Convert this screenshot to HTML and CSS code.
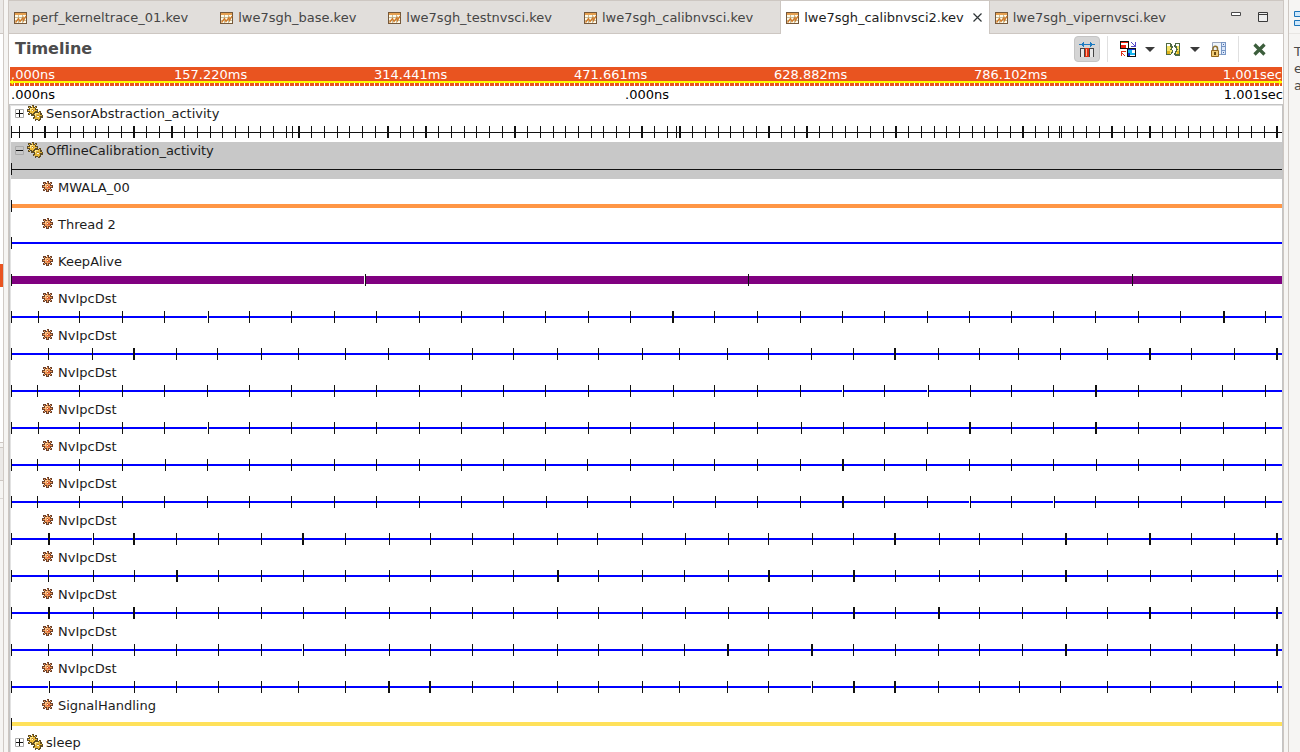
FILE: index.html
```html
<!DOCTYPE html>
<html lang="en">
<head>
<meta charset="utf-8">
<title>Timeline</title>
<link rel="stylesheet" href="styles.css">
</head>
<body>
<svg class="sprites" aria-hidden="true">
  <symbol id="i-file" viewBox="0 0 13 12" shape-rendering="crispEdges">
    <path fill="#75583a" d="M0 0h13v12H0z"/>
    <path fill="#e6a050" d="M1 1h11v2H1z"/>
    <path fill="#fffbea" d="M1 3h11v8H1z"/>
    <path fill="#c4bb9c" d="M1 5h11v1H1zM1 8h11v1H1zM4 3h1v8H4zM8 3h1v8H8z"/>
    <path fill="none" stroke="#d07a28" stroke-width="1.300" shape-rendering="auto" d="M1.500 10.500 4.500 6.500 6 9.500 9 5.500 9.500 8.500 12 4"/>
  </symbol>
  <symbol id="i-gear" viewBox="0 0 11 11" shape-rendering="crispEdges">
    <path fill="#6b412c" d="M2 1h2v1h1V0h2v2h1V1h2v2H9v1h2v3H9v1h1v2H8V9H7v2H4V9H3v1H1V8h1V7H0V4h2V3H1V1z"/>
    <path fill="#f09a58" d="M2 2h1v1H2zM5 1h1v2H5zM8 2h1v1H8zM1 5h2v1H1zM8 5h2v1H8zM2 8h1v1H2zM8 8h1v1H8zM5 8h1v2H5zM3 3h5v5H3z"/>
    <path fill="#ffc88c" d="M3 3h3v1H4v2H3z"/>
    <path fill="#e0603a" d="M5 7h3V5H7v1H5z"/>
    <path fill="#fff2dc" d="M5 5h1v1H5z"/>
    <path fill="#b45c34" d="M5 4h1v1H5zM6 5h1v1H6z"/>
  </symbol>
  <symbol id="i-gears" viewBox="0 0 16 16" shape-rendering="crispEdges">
    <path fill="#5e4c24" d="M2 1h2v1h1V0h2v2h1V1h2v2H9v1h2v3H9v1h1v2H8V9H7v2H4V9H3v1H1V8h1V7H0V4h2V3H1V1z"/>
    <path fill="#eebc3c" d="M2 2h1v1H2zM5 1h1v2H5zM8 2h1v1H8zM1 5h2v1H1zM8 5h2v1H8zM2 8h1v1H2zM5 8h1v2H5zM3 3h5v5H3z"/>
    <path fill="#ffe88c" d="M3 3h3v1H4v2H3z"/>
    <path fill="#fffbe8" d="M5 5h1v1H5z"/>
    <path fill="#b4842c" d="M5 4h1v1H5zM6 5h1v1H6z"/>
    <path fill="#5e4c24" d="M7 7h2V6h1v1h2V6h2v2h1v2h1v3h-2v2h-1v1h-2v-1h-2v1H8v-2H6v-2h1v-1H5V9h2z"/>
    <path fill="#e2b43a" d="M8 8h5v6H8zM7 9h1v1H7zM13 10h2v1h-2zM12 7h1v1h-1zM7 13h1v1H7zM11 14h1v1h-1z"/>
    <path fill="#ffe88c" d="M8 8h3v1H9v2H8z"/>
    <path fill="#b4842c" d="M10 10h2v1h-2zM12 11h1v1h-1z"/>
    <path fill="#fffbe8" d="M10 11h2v1h-2z"/>
  </symbol>
</svg>
<div class="workbench">
  <aside class="left-dock" aria-hidden="true">
    <div class="dock-tab"></div>
    <div class="dock-body"><div class="dock-selection"></div></div>
    <div class="dock-tab dock-tab-low"></div>
    <div class="dock-toolbar"></div>
    <div class="dock-rest"></div>
  </aside>

  <main class="view">
    <header class="tabs">
      <nav class="tab-list" role="tablist">
        <button class="tab" role="tab"><svg class="file-icon"><use href="#i-file"/></svg>perf_kerneltrace_01.kev</button>
        <button class="tab" role="tab"><svg class="file-icon"><use href="#i-file"/></svg>lwe7sgh_base.kev</button>
        <button class="tab" role="tab"><svg class="file-icon"><use href="#i-file"/></svg>lwe7sgh_testnvsci.kev</button>
        <button class="tab" role="tab"><svg class="file-icon"><use href="#i-file"/></svg>lwe7sgh_calibnvsci.kev</button>
        <div class="tab-active">
          <button class="tab" role="tab" aria-selected="true"><svg class="file-icon"><use href="#i-file"/></svg>lwe7sgh_calibnvsci2.kev</button>
          <button class="close" aria-label="Close tab"><svg width="9" height="9" viewBox="0 0 9 9"><path d="M.5.5l8 8M8.500.5l-8 8" fill="none" stroke="#2e3436" stroke-width="1.200"/></svg></button>
        </div>
        <button class="tab" role="tab"><svg class="file-icon"><use href="#i-file"/></svg>lwe7sgh_vipernvsci.kev</button>
      </nav>
      <div class="window-buttons">
        <button aria-label="Minimize"><svg width="11" height="11" viewBox="0 0 11 11"><path d="M.5.5h9v3h-9z" fill="#fff" stroke="#4a4a4a"/></svg></button>
        <button aria-label="Maximize"><svg width="11" height="11" viewBox="0 0 11 11"><path d="M.5.5h9v9h-9zM.5 2.500h9" fill="#eee" stroke="#3a3a3a"/></svg></button>
      </div>
    </header>

    <div class="titlebar">
      <h1>Timeline</h1>
      <div class="tools">
        <button class="toggle" aria-label="Show event range" aria-pressed="true">
          <svg width="16" height="16" viewBox="0 0 16 16" shape-rendering="crispEdges"><path fill="#1c7ac0" d="M0 3h16v1H0zM4 1h1v5H4zM11 1h1v5h-1zM3 2h1v3H3zM12 2h1v3h-1z"/><path fill="#444" d="M1 7h14v9h-1V8h-3v8h-1V8H6v8H5V8H2v8H1z"/><path fill="#e8e8e8" d="M2 8h3v8H2zM11 8h3v8h-3z"/><path fill="#e03010" d="M6 7h4v9H6z"/><path fill="#ffb090" d="M7 8h1v7H7z"/></svg>
        </button>
        <span class="divider"></span>
        <button class="tool-swap" aria-label="Switch pane">
          <svg width="16" height="16" viewBox="0 0 16 16" shape-rendering="crispEdges"><path fill="#111" d="M0 0h9v8H0z"/><path fill="#fff" d="M1 2h7v5H1z"/><path fill="#f02010" d="M1 1h7v1H1zM1 4h5v3H1z"/><path fill="#111" d="M7 7h9v9H7z"/><path fill="#fff" d="M8 9h7v6H8z"/><path fill="#18b8f0" d="M8 9h4v3H8zM10 12h5v2h-5z"/><path fill="#1030d0" d="M8 8h7v1H8zM8 12h2v3H8z"/><path fill="none" stroke="#5548c8" d="M11 1l4 4M15.500 1v4.500H11"/><path fill="none" stroke="#e03018" d="M5.500 15.500l-4-4M1.500 15v-4.500H6"/></svg>
          <span class="caret"></span>
        </button>
        <button class="tool-nav" aria-label="Navigate events">
          <svg width="15" height="13" viewBox="0 0 15 13" shape-rendering="crispEdges"><path fill="#4f6a44" d="M0 0h5v1h1v2h1v2H6v2h1v3H6v1H5v1H0zM9 0h5v13H9v-1H8v-2h1V8h1V5H9V4H8V2h1z"/><path fill="#f4e468" d="M1 3h3v1h1v2H4v1h2v2H5v2H1zM11 3h2v8h-3V9h1V7h1V6h-1z"/><path fill="#fff" d="M1 1h3v2H1zM10 1h3v2h-3z"/><path fill="#e0b41c" d="M1 8h3v3H1zM11 8h2v3h-2z"/></svg>
          <span class="caret"></span>
        </button>
        <button class="tool-lock" aria-label="Lock view">
          <svg width="16" height="16" viewBox="0 0 16 16"><path fill="#eef4fb" stroke="#9aa6bc" d="M1.500 1.500h13v12h-13z"/><path fill="#7896c4" d="M10 1h5v13h-5z"/><path fill="#dce8fa" d="M11 2h3v3h-3zM11 6h3v3h-3zM11 10h3v3h-3z"/><path fill="#4668a4" d="M12 3h1v1h-1zM12 11h1v1h-1z"/><path fill="none" stroke="#8c7030" stroke-width="1.500" d="M2 9V7.500a2.200 2.200 0 0 1 4.500 0V9"/><path fill="#f0cc78" stroke="#94681c" d="M.5 9.500h7v6h-7z"/><path fill="#6b4a10" d="M3 11h2v3H3z"/></svg>
        </button>
        <span class="divider"></span>
        <button class="tool-clear" aria-label="Clear">
          <svg width="13" height="13" viewBox="0 0 13 13"><path d="M1.500 1.500l10 10M11.500 1.500l-10 10" fill="none" stroke="#3c5e3c" stroke-width="3.200"/></svg>
        </button>
      </div>
    </div>

    <div class="ruler">
      <span>.000ns</span><span>157.220ms</span><span>314.441ms</span><span>471.661ms</span><span>628.882ms</span><span>786.102ms</span><span>1.001sec</span>
    </div>
    <div class="range"></div>
    <div class="selection"><span>.000ns</span><span>.000ns</span><span>1.001sec</span></div>
    <ul class="tree" id="tree"></ul>
  </main>

  <aside class="right-dock">
    <div class="outline-tab"><svg width="16" height="16" viewBox="0 0 16 16"><path fill="#cfe8fb" stroke="#1c74b8" d="M.5.5h6v5h-6zM.5 9.500h6v5h-6z"/></svg></div>
    <p>T<br>e<br>a</p>
  </aside>
</div>
<script src="timeline.js"></script>
</body>
</html>
```
FILE: styles.css
```css
* { box-sizing: border-box; }

body {
  margin: 0;
  height: 100vh;
  overflow: hidden;
  background: #f6f5f3;
  color: #1c1c1c;
  font: 13px/18px "DejaVu Sans", sans-serif;
}

button {
  margin: 0;
  padding: 0;
  border: 0;
  background: none;
  color: inherit;
  font: inherit;
}

svg { display: block; flex: none; }
.sprites { position: absolute; width: 0; height: 0; }

.workbench {
  display: grid;
  grid-template-columns: 4px minmax(0, 1fr) 12px;
  column-gap: 4px;
  height: 100%;
}

/* Neighbouring docks */
.left-dock {
  display: flex;
  flex-direction: column;
  border-right: 1px solid #d0cac5;
}
.dock-tab { height: 34px; background: #ebe9e7; border-bottom: 1px solid #cdc7c2; }
.dock-body { height: 409px; padding-top: 230px; background: #fff; border-bottom: 1px solid #cdc7c2; }
.dock-selection { height: 23px; background: #e95420; }
.dock-tab-low { margin-top: 4px; border-top: 1px solid #cdc7c2; }
.dock-toolbar { height: 18px; border-bottom: 1px solid #dcd8d5; }
.dock-rest { flex: 1; }

.right-dock { border-left: 1px solid #cdc7c2; }
.outline-tab { height: 34px; padding: 11px 0 0 5px; border-bottom: 1px solid #e8e6e3; }
.right-dock p { margin: 0; padding: 9px 0 0 5px; color: #4a4a4a; line-height: 17px; }

/* Editor view */
.view {
  display: flex;
  flex-direction: column;
  min-width: 0;
  overflow: hidden;
  border: 1px solid #cdc7c2;
  border-bottom: 0;
  background: #fff;
}

.tabs {
  display: flex;
  flex: none;
  height: 33px;
  background: #e1dedb;
  box-shadow: inset 0 -1px #cdc7c2;
}
.tab-list { display: flex; flex: 1; min-width: 0; overflow: hidden; }
.tab {
  display: flex;
  align-items: center;
  gap: 5px;
  padding: 0 27px 0 5px;
  color: #454545;
  white-space: nowrap;
}
.file-icon { width: 13px; height: 12px; }
.tab-active {
  display: flex;
  align-items: center;
  padding-right: 7px;
  border: solid #cdc7c2;
  border-width: 0 1px;
  background: #fff;
}
.tab-active .tab { padding-right: 9px; color: #1c1c1c; }
.window-buttons { display: flex; gap: 16px; padding: 11px 14px 0 0; }
.window-buttons button { display: flex; align-items: flex-start; }

.titlebar {
  display: flex;
  flex: none;
  align-items: center;
  justify-content: space-between;
  height: 33px;
  padding: 0 17px 3px 6px;
}
.titlebar h1 { margin: 0; color: #4c4c4c; font-size: 16px; line-height: 20px; }
.tools { display: flex; align-items: center; }
.tools button { display: flex; align-items: center; }
.tools .toggle {
  justify-content: center;
  width: 26px;
  height: 26px;
  border: 1px solid #c4c4c4;
  border-radius: 4px;
  background: #d5d5d5;
}
.divider { width: 1px; height: 26px; margin: 0 12px 0 7px; background: #e0e0e0; }
.tool-swap, .tool-nav { gap: 9px; margin-right: 11px; }
.tool-lock + .divider { margin: 0 14px 0 11px; }
.caret { border: solid transparent; border-width: 5px 5px 0; border-top-color: #3a3a3a; }

/* Time axis */
.ruler {
  display: grid;
  flex: none;
  grid-template-columns: 163fr 200fr 200fr 200fr 200fr 200fr 108fr;
  height: 14px;
  margin: 0 1px;
  padding-left: 1px;
  background: #e95420;
  color: #fff;
  line-height: 16px;
  white-space: nowrap;
}
.ruler span:last-child { text-align: right; }
.range {
  position: relative;
  flex: none;
  height: 5px;
  margin: 0 1px;
  border-top: 2px solid #ff0;
  background: repeating-linear-gradient(90deg, #e95420 0 4px, #fff 4px 5px);
}
.range::before, .range::after {
  content: "";
  position: absolute;
  top: -4px;
  border: solid transparent;
  border-width: 3px 0;
}
.range::before { left: 0; border-right: 3px solid #ff0; }
.range::after { right: 0; border-left: 3px solid #ff0; }
.selection {
  display: grid;
  flex: none;
  grid-template-columns: 1fr auto 1fr;
  height: 18px;
  padding-left: 2px;
  color: #000;
}
.selection span:last-child { text-align: right; }

/* Process and thread rows */
.tree {
  flex: 1;
  min-height: 0;
  margin: 0;
  padding: 0 0 0 1px;
  overflow: hidden;
  border: 1px solid #c4c4c4;
  border-bottom: 0;
  box-shadow: inset 1px 1px #e2e2e2;
  list-style: none;
}
.row { height: 37px; }
.row.selected { background: #c8c8c8; }
.label { display: flex; height: 18px; margin-bottom: 3px; padding-left: 4px; }
.child .label { padding-left: 31px; gap: 5px; }
.expander { width: 9px; height: 9px; margin: 4px 3px 0 0; }
.gears { width: 16px; height: 16px; margin-right: 3px; }
.gear { width: 11px; height: 11px; margin-top: 2px; }
.track { width: 100%; height: 12px; overflow: visible; }
```
FILE: timeline.js
```js
// Trace extent, in the same units as the event marks below.
const START = 11;
const END = 1282;

// Marks: a number is one event, "b" is a pair of adjacent events,
// "g" is an event that follows a short gap in the state bar.
const rows = [
  { name: "SensorAbstraction_activity", process: true, open: false, color: "#111", size: 1,
    marks: "11 19 32 44b 57 70 83 95 108 121 133b 146 159 171b 184 197 210 222 235 248 260 273 286 292 298b 311 324 337 349 362 375 387b 400 413 425b 438 451 464 476 489 502 514b 527 540 553 565 578 591 603 616 629 641b 654 667 676 679b 692 705 718 730 743 756 768b 781 794 806b 819 832 845 857 870 883 895b 908 921 934 946 959 972 984 997 1010 1022b 1035 1048 1059 1061 1073 1086 1099 1111b 1124 1137 1149b 1162 1175 1188 1200 1213 1226 1238 1251 1264 1276b" },
  { name: "OfflineCalibration_activity", process: true, open: true, selected: true, color: "#111", size: 1, marks: "11" },
  { name: "MWALA_00", color: "#ff9645", size: 4, marks: "11" },
  { name: "Thread 2", color: "#00f", size: 2, marks: "11" },
  { name: "KeepAlive", color: "#800080", size: 8, marks: "11 365g 748 1132" },
  { name: "NvIpcDst", color: "#00f", size: 2, marks: "11 38 79 122 164 208g 249 291 334 376 419 461 503 545 588 630 672b 714 757 800 842 884 927 969 1011 1053 1095 1138 1180 1223b 1265" },
  { name: "NvIpcDst", color: "#00f", size: 2, marks: "11 48 92 133b 176 217 261 298 345 388 429 472 513 557 598 642 679 727 768 811 853 894b 938 979 1018 1060 1107 1149b 1191 1234 1276b" },
  { name: "NvIpcDst", color: "#00f", size: 2, marks: "11 37 79 122 164 207 249 291 334 376 419 461 503 545 588 630 673 714 757 800 843g 884 928g 970 1011 1053 1095b 1138 1181 1222 1265" },
  { name: "NvIpcDst", color: "#00f", size: 2, marks: "11 38 79 122 164 208g 249 291 334 376 419 461 503 545 588 630 673 714 757 801 843 884 927 969b 1011 1053 1095b 1138 1180 1223 1265" },
  { name: "NvIpcDst", color: "#00f", size: 2, marks: "11 37 79 122 165 207 249 291 334 376 419 461 503 545 587 630 673 714 757 800 842b 884 926 969 1011 1053 1096 1138 1180 1223 1265" },
  { name: "NvIpcDst", color: "#00f", size: 2, marks: "11 37 79 122 164 207 249 291 334 376 419 461 503 546 587 630 673g 715 757 800 842b 884 927 970g 1011 1054g 1095 1138 1181 1224 1265" },
  { name: "NvIpcDst", color: "#00f", size: 2, marks: "11 48b 93g 133b 176 218 261 302b 345 389 430 472 513 557 597 642 685 728 768 812 853 894b 939 979 1022 1065b 1107 1149b 1191 1234 1276b" },
  { name: "NvIpcDst", color: "#00f", size: 2, marks: "11 48 93 134 176b 218 261 303 345 389 430 472 513 557b 598 642 684 728 768b 812 853b 895 939 979 1022 1065b 1107 1150 1191 1234 1277" },
  { name: "NvIpcDst", color: "#00f", size: 2, marks: "11 48b 93 133b 176 218 261 303 345 389 430 472 513 557 598 642 685 728 768 812 853b 895 938b 979 1022 1066 1107 1149b 1191 1234 1276b" },
  { name: "NvIpcDst", color: "#00f", size: 2, marks: "11 48 92 134 176 218 261 303g 345 389 430 472 513 557 598 642 684 727b 768 811b 853 895 938 979 1022 1065b 1107 1150 1191 1234 1276b" },
  { name: "NvIpcDst", color: "#00f", size: 2, marks: "11 49g 92 134 176 218 261 298 345 388b 429b 472 513 557 598 642 679 727 768 812g 853b 894b 938 979 1019 1060 1107 1150 1191 1234 1277" },
  { name: "SignalHandling", color: "#ffe15a", size: 4, marks: "11" },
  { name: "sleep", process: true, open: false, color: "#111", size: 1, marks: "11" }
];

const tree = document.getElementById("tree");

function expander(open) {
  const bars = open ? "M1 4h7v1H1z" : "M1 4h7v1H1zM4 1h1v7H4z";
  return `<button class="expander" aria-expanded="${open}" aria-label="${open ? "Collapse" : "Expand"}">` +
    `<svg width="9" height="9" viewBox="0 0 9 9"><path fill="none" stroke="#aaa" d="M.5.5h8v8h-8z"/><path fill="#111" d="${bars}"/></svg></button>`;
}

tree.innerHTML = rows.map(row => {
  const lead = row.process
    ? expander(row.open) + '<svg class="gears"><use href="#i-gears"/></svg>'
    : '<svg class="gear"><use href="#i-gear"/></svg>';
  return `<li class="row${row.process ? "" : " child"}${row.selected ? " selected" : ""}">` +
    `<div class="label">${lead}<span>${row.name}</span></div><svg class="track" shape-rendering="crispEdges"></svg></li>`;
}).join("");

function draw() {
  document.querySelectorAll(".track").forEach((svg, i) => {
    const row = rows[i];
    const width = svg.clientWidth || svg.getBoundingClientRect().width;
    const y = 6 - Math.floor(row.size / 2);
    let out = `<rect x="0" y="${y}" width="${width}" height="${row.size}" fill="${row.color}"/>`;
    for (const mark of row.marks.split(" ")) {
      const x = Math.round((parseInt(mark, 10) - START) / (END - START) * width);
      if (mark.endsWith("g")) {
        out += `<rect x="${x - 1}" y="${y}" width="1" height="${row.size}" fill="#fff"/>`;
      }
      out += `<rect x="${x}" y="0" width="${mark.endsWith("b") ? 2 : 1}" height="12" fill="#111"/>`;
    }
    svg.innerHTML = out;
  });
}

draw();
window.addEventListener("resize", draw);
```
